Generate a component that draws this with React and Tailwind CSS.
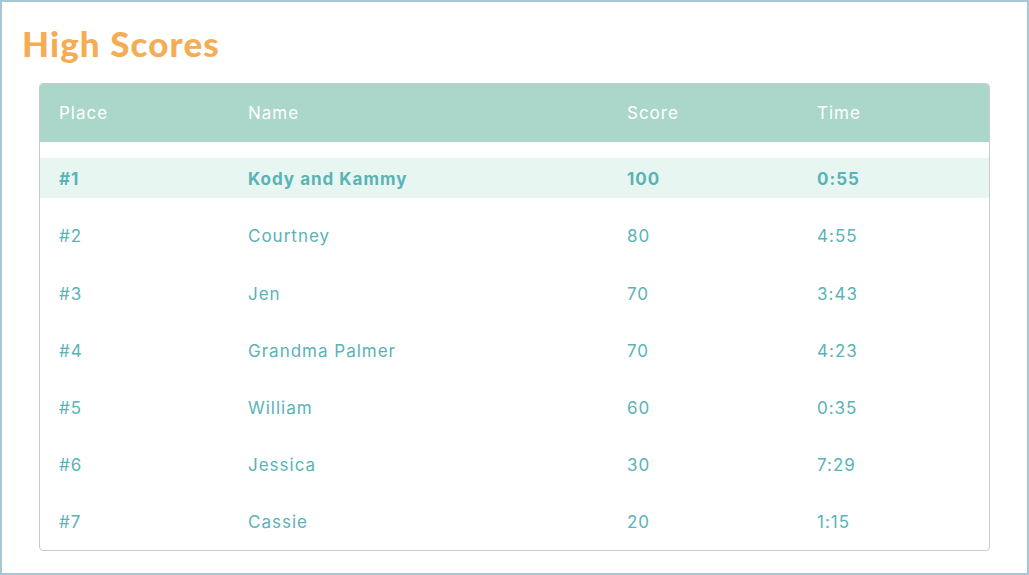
import React from "react";

const rows = [
  ["#1", "Kody and Kammy", "100", "0:55"],
  ["#2", "Courtney", "80", "4:55"],
  ["#3", "Jen", "70", "3:43"],
  ["#4", "Grandma Palmer", "70", "4:23"],
  ["#5", "William", "60", "0:35"],
  ["#6", "Jessica", "30", "7:29"],
  ["#7", "Cassie", "20", "1:15"],
];

export default function App() {
  return (
    <div
      className="w-[1029px] h-[575px] border-2 border-[#a7c7d7] bg-white overflow-hidden"
      style={{ fontFamily: "Inter, 'Noto Sans', sans-serif" }}
    >
      <h1
        className="pl-[20px] pt-[21px] text-[35px] leading-[40px] text-[#f5ad55] tracking-[1.1px]"
        style={{ fontFamily: "Lato, 'Open Sans', sans-serif", fontWeight: 900 }}
      >
        High Scores
      </h1>
      <div className="ml-[37px] mt-[20px] w-[951px] border border-[#c9cccf] rounded-[4px] overflow-hidden">
        <div className="grid grid-cols-[189px_379px_190px_1fr] pl-[19px] h-[58px] pt-[2px] items-center bg-[#abd6ca] text-white text-[17px] tracking-[1px]">
          <div>Place</div>
          <div>Name</div>
          <div>Score</div>
          <div>Time</div>
        </div>
        <div className="pt-4 pb-[9px] flex flex-col gap-[17.2px]">
          {rows.map((r, i) => (
            <div
              key={i}
              className={
                "grid grid-cols-[189px_379px_190px_1fr] pl-[19px] h-10 pt-[4px] items-center text-[17px] tracking-[1px] text-[#5ab3b7] " +
                (i === 0 ? "bg-[#e8f6f1] font-bold" : "")
              }
            >
              <div>{r[0]}</div>
              <div>{r[1]}</div>
              <div>{r[2]}</div>
              <div>{r[3]}</div>
            </div>
          ))}
        </div>
      </div>
    </div>
  );
}
